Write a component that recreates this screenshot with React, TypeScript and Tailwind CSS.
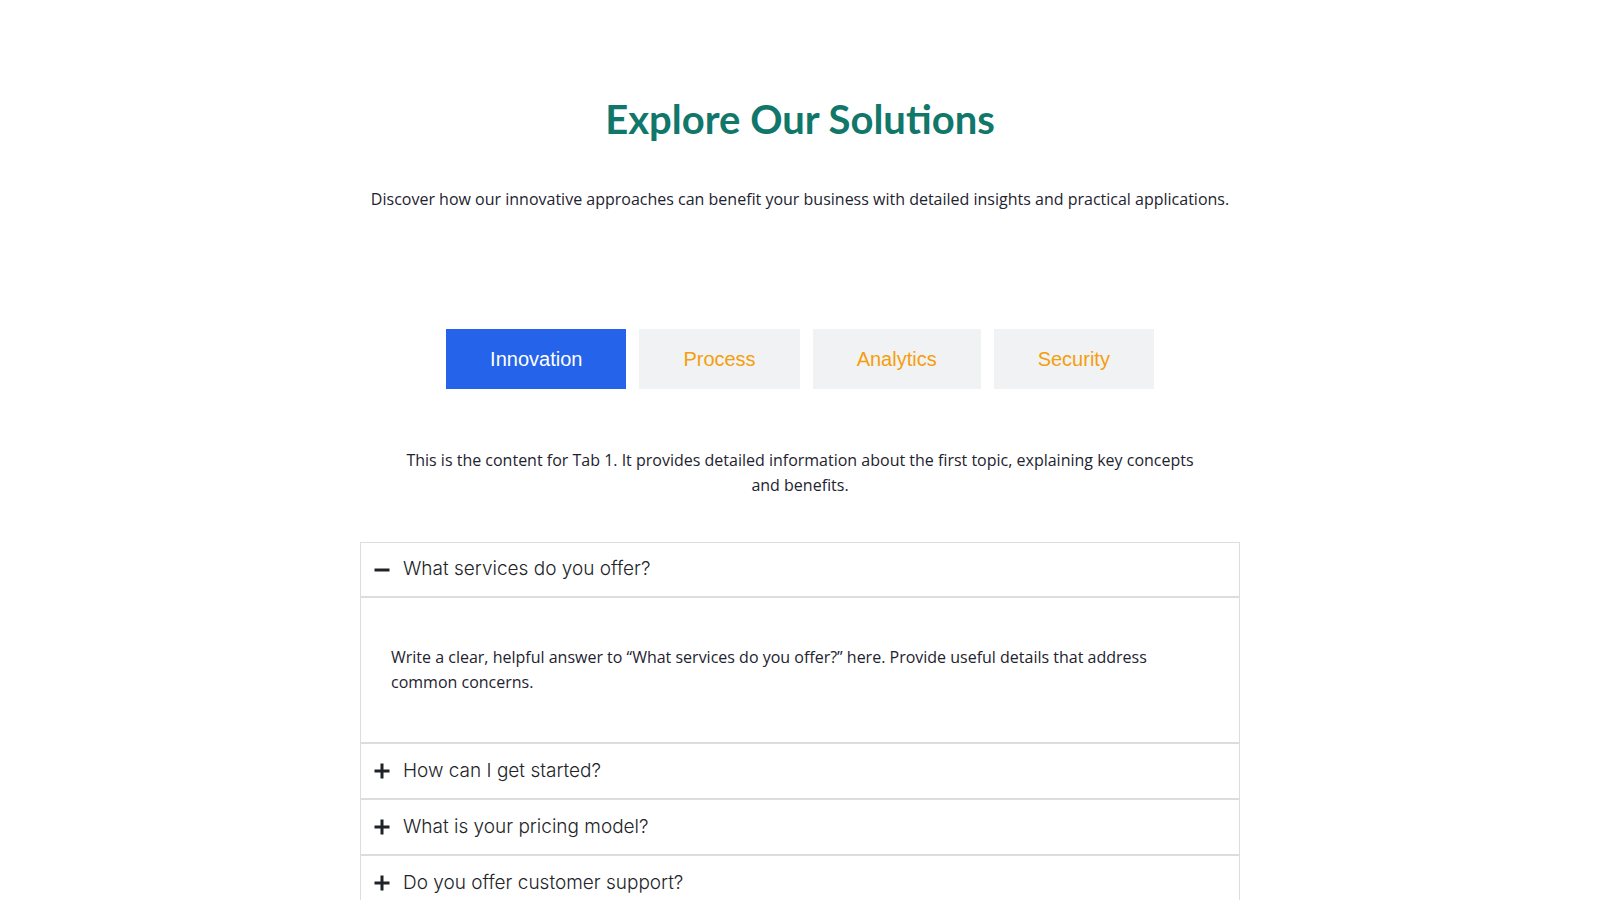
import { useState } from "react";

const tabs = [
  {
    label: "Innovation",
    content:
      "This is the content for Tab 1. It provides detailed information about the first topic, explaining key concepts and benefits.",
  },
  {
    label: "Process",
    content:
      "This is the content for Tab 2. It walks through the process step by step, describing how each stage fits together.",
  },
  {
    label: "Analytics",
    content:
      "This is the content for Tab 3. It explains how analytics turn raw data into insights that support better decisions.",
  },
  {
    label: "Security",
    content:
      "This is the content for Tab 4. It covers the security measures that keep your information safe and protected.",
  },
];

const faqs = [
  "What services do you offer?",
  "How can I get started?",
  "What is your pricing model?",
  "Do you offer customer support?",
];

function PlusIcon() {
  return (
    <svg className="h-[18px] w-[18px] shrink-0" viewBox="0 0 18 18" fill="none">
      <path d="M9 1.5v15M1.5 9h15" stroke="#1f2328" strokeWidth="3" />
    </svg>
  );
}

function MinusIcon() {
  return (
    <svg className="h-[18px] w-[18px] shrink-0" viewBox="0 0 18 18" fill="none">
      <path d="M1.5 9h15" stroke="#1f2328" strokeWidth="3" />
    </svg>
  );
}

export default function App() {
  const [activeTab, setActiveTab] = useState(0);
  const [openFaq, setOpenFaq] = useState<number | null>(0);

  return (
    <div className="min-h-screen bg-white font-['Open_Sans',sans-serif] text-[#1e2330]">
      <section className="mx-auto flex max-w-[880px] flex-col items-center pt-[95px]">
        <h1 className="font-['Lato',sans-serif] text-[40px] font-bold leading-[48px] text-[#11776b]">
          Explore Our Solutions
        </h1>
        <p className="mt-11 text-base leading-6">
          Discover how our innovative approaches can benefit your business with detailed insights and practical applications.
        </p>

        <div className="mt-[118px] flex gap-[13px] font-['Liberation_Sans',Arial,sans-serif]">
          {tabs.map((tab, index) => (
            <button
              key={tab.label}
              className={
                index === activeTab
                  ? "bg-[#2563eb] px-[44px] py-4 text-xl leading-7 text-white"
                  : "bg-[#f1f2f4] px-[44px] py-4 text-xl leading-7 text-[#f59e0b]"
              }
              onClick={() => setActiveTab(index)}
              type="button"
            >
              {tab.label}
            </button>
          ))}
        </div>

        <p className="mt-[59px] max-w-[800px] text-center text-base leading-[25px]">{tabs[activeTab].content}</p>

        <div className="mt-11 w-full">
          {faqs.map((question, index) => {
            const open = openFaq === index;
            return (
              <div key={question} className="border border-[#dcdde1]">
                <button
                  className={
                    open
                      ? "flex h-[54px] w-full items-center gap-3 border-b border-[#dcdde1] px-3 text-left"
                      : "flex h-[54px] w-full items-center gap-3 px-3 text-left"
                  }
                  onClick={() => setOpenFaq(open ? null : index)}
                  type="button"
                >
                  {open ? <MinusIcon /> : <PlusIcon />}
                  <span className="font-['Inter',sans-serif] text-[19px] font-light text-[#222428]">{question}</span>
                </button>
                {open && (
                  <div className="border-t border-[#dcdde1] px-[30px] py-[47px] text-base leading-[25px]">
                    {`Write a clear, helpful answer to “${question}” here. Provide useful details that address common concerns.`}
                  </div>
                )}
              </div>
            );
          })}
        </div>
      </section>
    </div>
  );
}
